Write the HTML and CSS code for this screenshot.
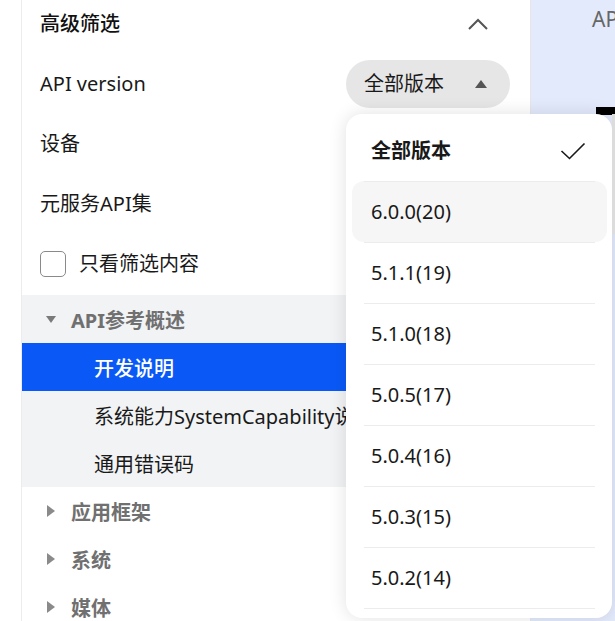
FILE: index.html
```html
<!DOCTYPE html>
<html lang="zh-CN">
<head>
<meta charset="utf-8">
<title>高级筛选</title>
<link rel="stylesheet" href="styles.css">
</head>
<body>
<div class="page">
  <div class="gutter"></div>
  <aside class="sidebar">
    <div class="filters">
      <div class="row head">
        <span class="title">高级筛选</span>
        <span class="chev">
          <svg width="22" height="14" viewBox="0 0 22 14"><polyline points="2,12 11,3 20,12" fill="none" stroke="#555" stroke-width="2"/></svg>
        </span>
      </div>
      <div class="row">
        <span class="label">API version</span>
        <span class="pill">全部版本<svg class="pill-tri" width="12" height="8" viewBox="0 0 12 8"><polygon points="6,0 12,8 0,8" fill="#555"/></svg></span>
      </div>
      <div class="row"><span class="label">设备</span></div>
      <div class="row"><span class="label">元服务API集</span></div>
      <div class="row">
        <span class="check-wrap"><span class="checkbox"></span><span class="label">只看筛选内容</span></span>
      </div>
    </div>
    <div class="tree">
      <div class="node open"><span class="tri-down"></span><span>API参考概述</span></div>
      <div class="leaf active">开发说明</div>
      <div class="leaf">系统能力SystemCapability说明</div>
      <div class="leaf">通用错误码</div>
    </div>
    <div class="node"><span class="tri-right"></span><span>应用框架</span></div>
    <div class="node"><span class="tri-right"></span><span>系统</span></div>
    <div class="node"><span class="tri-right"></span><span>媒体</span></div>
  </aside>
  <main class="main">
    <div class="crumb">API参考</div>
    <div class="heading-top"></div>
  </main>
</div>
<div class="dropdown">
  <div class="dd-item selected">全部版本
    <svg class="tick" width="26" height="18" viewBox="0 0 26 18"><polyline points="1.5,9 9.5,16.5 24.5,1.5" fill="none" stroke="#191919" stroke-width="1.6"/></svg>
  </div>
  <div class="dd-item hover">6.0.0(20)</div>
  <div class="dd-item">5.1.1(19)</div>
  <div class="dd-item">5.1.0(18)</div>
  <div class="dd-item">5.0.5(17)</div>
  <div class="dd-item">5.0.4(16)</div>
  <div class="dd-item">5.0.3(15)</div>
  <div class="dd-item">5.0.2(14)</div>
  <div class="dd-item">5.0.1(13)</div>
</div>
<div class="scroll-thumb"></div>
</body>
</html>
```

FILE: styles.css
```css
html, body {
  margin: 0;
  padding: 0;
  background: #fff;
}
body {
  font-family: "Noto Sans", "Noto Sans CJK SC", sans-serif;
  font-size: 20px;
  color: #191919;
  width: 615px;
  height: 621px;
  overflow: hidden;
  position: relative;
}
.page {
  display: flex;
  height: 621px;
  overflow: hidden;
}
.gutter {
  width: 21px;
  flex: none;
  border-right: 1px solid #ececec;
}
.sidebar {
  width: 508px;
  flex: none;
  border-right: 1px solid #e6e6e6;
  overflow: hidden;
}
.filters {
  display: flex;
  flex-direction: column;
  gap: 12px;
  padding: 0 20px 7px 18px;
}
.row {
  height: 48px;
  display: flex;
  align-items: center;
  justify-content: space-between;
  line-height: 28px;
}
.title {
  font-size: 20px;
  font-weight: 500;
  color: #111;
}
.chev {
  width: 22px;
  height: 14px;
  display: flex;
  margin-right: 21px;
}
.pill {
  height: 48px;
  box-sizing: border-box;
  width: 164px;
  border-radius: 24px;
  background: #e6e6e6;
  display: flex;
  align-items: center;
  justify-content: space-between;
  padding: 0 23px 0 18px;
  color: #191919;
}
.pill-tri {
  display: block;
}
.check-wrap {
  display: flex;
  align-items: center;
  gap: 13px;
}
.checkbox {
  width: 24px;
  height: 24px;
  border: 1.5px solid #8a8a8a;
  border-radius: 5px;
  box-sizing: content-box;
}
.tree {
  background: #f1f3f5;
}
.node {
  height: 48px;
  display: flex;
  align-items: center;
  padding-left: 24px;
  font-weight: 700;
  color: #707070;
  white-space: nowrap;
}
.tri-down {
  width: 0;
  height: 0;
  border-left: 5px solid transparent;
  border-right: 5px solid transparent;
  border-top: 7px solid #7a7a7a;
  margin-right: 15px;
}
.tri-right {
  width: 0;
  height: 0;
  border-top: 6px solid transparent;
  border-bottom: 6px solid transparent;
  border-left: 8px solid #8a8a8a;
  margin-left: 1px;
  margin-right: 16px;
}
.leaf {
  height: 48px;
  display: flex;
  align-items: center;
  padding-left: 72px;
  white-space: nowrap;
  overflow: hidden;
  color: #191919;
}
.leaf.active {
  background: #0a59f7;
  color: #fff;
  font-weight: 500;
}
.main {
  flex: 1;
  background: #e3eafc;
  padding-left: 61px;
  position: relative;
}
.crumb {
  font-size: 21px;
  color: #666;
  line-height: 24px;
  margin-top: 7px;
  white-space: nowrap;
}
.heading-top {
  width: 24px;
  height: 8px;
  background: #000;
  margin-top: 76px;
  margin-left: 4px;
}
.dropdown {
  position: absolute;
  left: 346px;
  top: 114px;
  width: 266px;
  height: 504px;
  box-sizing: border-box;
  padding: 6px 5px 0 6px;
  background: #fff;
  border-radius: 16px;
  box-shadow: 0 0 18px rgba(0, 0, 0, 0.12);
  overflow: hidden;
}
.dd-item {
  height: 61px;
  display: flex;
  align-items: center;
  justify-content: space-between;
  padding: 0 21px 0 19px;
  position: relative;
  border-radius: 12px;
  line-height: 28px;
}
.dd-item + .dd-item::before {
  content: "";
  position: absolute;
  top: 0;
  left: 12px;
  right: 12px;
  height: 1px;
  background: #ececec;
}
.dd-item.selected {
  font-weight: 700;
}
.dd-item.hover {
  background: #f6f6f6;
}
.tick {
  display: block;
}
.scroll-thumb {
  position: absolute;
  left: 612px;
  top: 114px;
  width: 3px;
  height: 120px;
  background: #dcdcdc;
}
```
